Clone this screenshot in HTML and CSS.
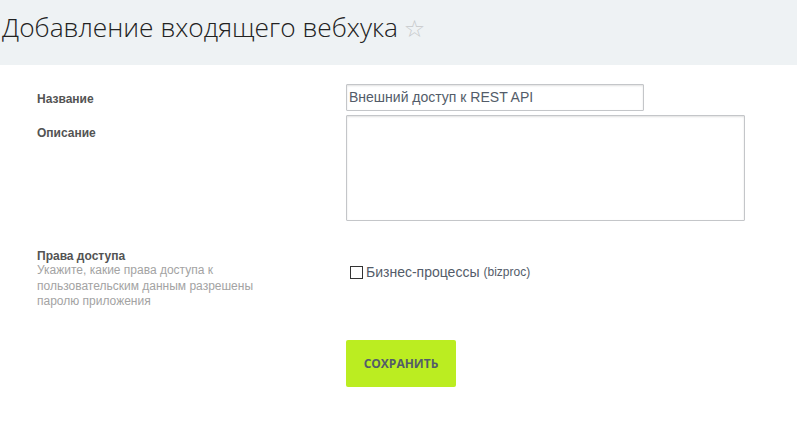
FILE: index.html
```html
<!DOCTYPE html>
<html lang="ru">
<head>
<meta charset="utf-8">
<title>Добавление входящего вебхука</title>
<link rel="stylesheet" href="styles.css">
</head>
<body>
<div class="header">
  <h1 class="title">Добавление входящего вебхука <span class="star">☆</span></h1>
</div>
<form class="form">
  <div class="row row-name">
    <div class="label">Название</div>
    <div class="field"><input class="input" type="text" value="Внешний доступ к REST API"></div>
  </div>
  <div class="row row-desc">
    <div class="label">Описание</div>
    <div class="field"><textarea class="textarea"></textarea></div>
  </div>
  <div class="row row-rights">
    <div class="label">Права доступа
      <div class="hint">Укажите, какие права доступа к пользовательским данным разрешены паролю приложения</div>
    </div>
    <div class="field field-check">
      <label class="check"><span class="box"></span>Бизнес-процессы <span class="code">(bizproc)</span></label>
    </div>
  </div>
  <div class="row row-btn">
    <div class="label"></div>
    <div class="field"><button class="btn" type="button">СОХРАНИТЬ</button></div>
  </div>
</form>
</body>
</html>
```
FILE: styles.css
```css
html, body {
  margin: 0;
  padding: 0;
  background: #fff;
}
body {
  font-family: "Liberation Sans", Arial, sans-serif;
  width: 797px;
  height: 432px;
  overflow: hidden;
}
.header {
  background: #eef2f4;
  height: 65px;
  box-sizing: border-box;
  padding: 9px 0 0 2px;
}
.title {
  margin: 0;
  font-family: "Open Sans", sans-serif;
  font-weight: 300;
  font-size: 26.3px;
  line-height: 36px;
  color: #222;
}
.star {
  color: #c6c8ca;
  font-family: "DejaVu Sans", sans-serif;
  font-size: 24px;
  font-weight: 400;
  margin-left: -1px;
}
.form {
  padding: 19px 0 0 37px;
}
.row {
  display: grid;
  grid-template-columns: 309px 1fr;
}
.label {
  font-size: 12px;
  font-weight: bold;
  color: #535353;
  line-height: 16px;
}
.row-name .label { padding-top: 7px; }
.row-desc { margin-top: 4px; }
.row-desc .label { padding-top: 10px; }
.row-rights { margin-top: 27px; }
.hint {
  font-weight: normal;
  color: #a3a3a3;
  width: 240px;
  line-height: 15.5px;
  margin-top: -1px;
}
.input {
  box-sizing: border-box;
  width: 298px;
  height: 27px;
  border: 1px solid #c4c6c9;
  border-radius: 1px;
  box-shadow: inset 0 1px 2px rgba(0,0,0,0.12);
  padding: 0 0 2px 2px;
  font-family: "Liberation Sans", Arial, sans-serif;
  font-size: 14px;
  color: #535c69;
  outline: none;
  margin: 0;
  display: block;
}
.textarea {
  box-sizing: border-box;
  display: block;
  width: 399px;
  height: 106px;
  border: 1px solid #c4c6c9;
  border-radius: 1px;
  box-shadow: inset 0 1px 2px rgba(0,0,0,0.12);
  resize: none;
  margin: 0;
  outline: none;
}
.field-check {
  padding: 16px 0 0 4px;
}
.check {
  display: flex;
  align-items: center;
  font-size: 14px;
  color: #535c69;
  line-height: 16px;
}
.box {
  display: inline-block;
  width: 11px;
  height: 11px;
  border: 1px solid #333;
  background: #fff;
  margin-right: 3px;
}
.code {
  font-size: 12px;
  margin-left: 4px;
}
.row-btn { margin-top: 30px; }
.btn {
  width: 110px;
  height: 47px;
  border: none;
  border-radius: 2px;
  background: #bbed21;
  color: #535c69;
  font-family: "Open Sans", sans-serif;
  font-weight: 700;
  font-size: 12px;
  padding: 0;
  cursor: pointer;
}
```
